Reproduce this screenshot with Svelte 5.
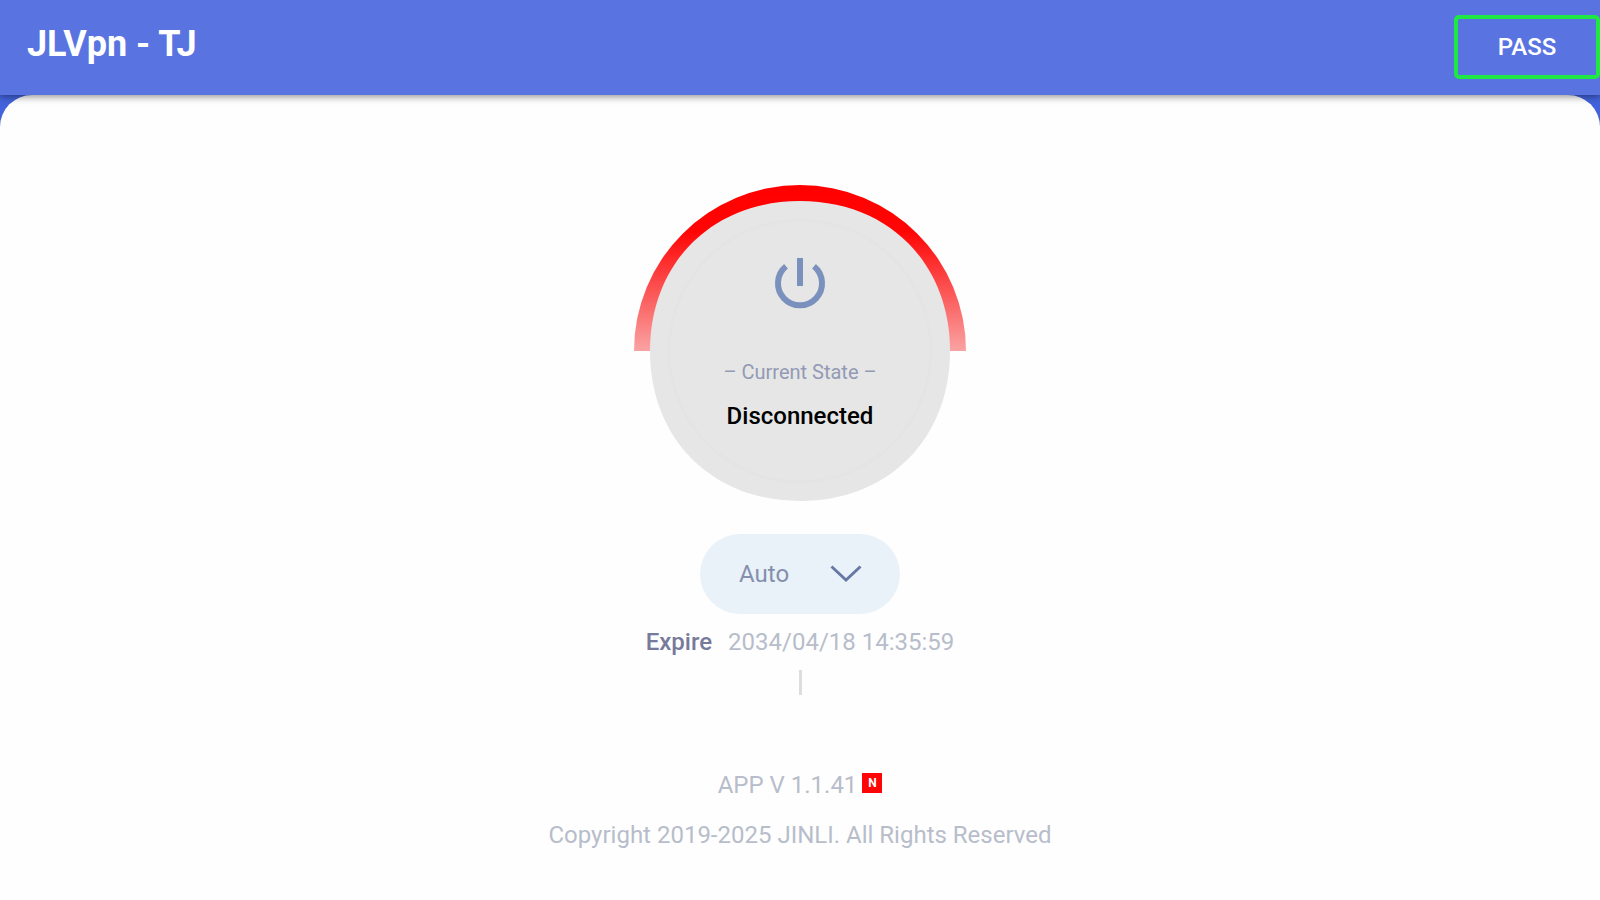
<script>
  let mode = $state('auto');
</script>

<div class="app">
  <header>
    <h1>JLVpn - TJ</h1>
    <button class="pass" type="button">PASS</button>
  </header>

  <main>
    <button class="dial" type="button">
      <svg class="ring" viewBox="0 0 332 316" aria-hidden="true">
        <defs>
          <linearGradient id="fade" gradientUnits="userSpaceOnUse" x1="0" y1="0" x2="0" y2="166">
            <stop offset="0" stop-color="#ff0000" />
            <stop offset="0.28" stop-color="#ff0505" />
            <stop offset="0.6" stop-color="#fc4c4c" />
            <stop offset="1" stop-color="#faa3a3" />
          </linearGradient>
        </defs>
        <path d="M0 166a166 166 0 0 1 332 0z" fill="url(#fade)" />
        <path
          d="M16 166C16 78 78 16 166 16S316 78 316 166S254 316 166 316S16 254 16 166z"
          fill="#e6e6e6"
        />
        <circle cx="166" cy="166" r="131" fill="none" stroke="#e4e4e4" stroke-width="3" />
      </svg>
      <span class="face">
        <svg class="power" viewBox="0 0 50 50" aria-hidden="true">
          <path d="M11 8.300a22 22 0 1 0 28 0" fill="none" stroke="#7b91bd" stroke-width="6" />
          <path d="M25 0v28" stroke="#7b91bd" stroke-width="6" />
        </svg>
        <span class="caption">– Current State –</span>
        <span class="state">Disconnected</span>
      </span>
    </button>

    <div class="picker">
      <select bind:value={mode} aria-label="Server">
        <option value="auto">Auto</option>
      </select>
      <svg class="chevron" viewBox="0 0 32 18" aria-hidden="true">
        <path d="M1.5 1.500L16 15L30.500 1.500" fill="none" stroke="#667aa5" stroke-width="3" />
      </svg>
    </div>

    <p class="expire"><strong>Expire</strong><span>2034/04/18 14:35:59</span></p>
    <div class="divider"></div>

    <footer>
      <p class="version">APP V 1.1.41<span class="badge">N</span></p>
      <p>Copyright 2019-2025 JINLI. All Rights Reserved</p>
    </footer>
  </main>
</div>

<style>
  :global(body) {
    margin: 0;
  }

  .app {
    display: flex;
    flex-direction: column;
    min-height: 100vh;
    background: #4263dc;
    font-family: Roboto, sans-serif;
    font-size: 24px;
    line-height: 32px;
    color: #b7bdca;
  }

  header {
    display: flex;
    align-items: center;
    justify-content: space-between;
    box-sizing: border-box;
    height: 95px;
    padding: 0 0 2px 27px;
    background: #5974e1;
    box-shadow: 0 1px 8px rgba(0, 0, 0, 0.5);
    z-index: 1;
    color: #fff;
  }

  h1 {
    margin: 0 0 6px;
    font-size: 36px;
    line-height: 44px;
    font-weight: 700;
  }

  .pass {
    box-sizing: border-box;
    width: 146px;
    height: 64px;
    padding: 0;
    border: 4px solid #1fe743;
    border-radius: 5px;
    background: none;
    color: #fff;
    font: 500 24px/32px Roboto, sans-serif;
  }

  main {
    flex: 1;
    display: flex;
    flex-direction: column;
    align-items: center;
    padding: 90px 0 48px;
    border-radius: 32px 32px 0 0;
    background: #fefefe;
  }

  p {
    margin: 0;
  }

  .dial {
    display: grid;
    width: 332px;
    padding: 0;
    border: 0;
    background: none;
    font: inherit;
  }

  .ring,
  .face {
    grid-area: 1 / 1;
  }

  .ring {
    display: block;
    width: 100%;
  }

  .face {
    display: flex;
    flex-direction: column;
    align-items: center;
    padding-top: 73px;
  }

  .power {
    width: 50px;
    height: 50px;
    overflow: visible;
  }

  .caption {
    margin-top: 48px;
    font-size: 20px;
    color: #929ab5;
  }

  .state {
    margin-top: 12px;
    font-weight: 500;
    color: #000;
  }

  .picker {
    display: grid;
    align-items: center;
    width: 200px;
    margin-top: 33px;
  }

  select {
    grid-area: 1 / 1;
    appearance: none;
    width: 100%;
    height: 80px;
    padding: 0 72px 0 39px;
    border: 0;
    border-radius: 40px;
    background: #eaf2f9;
    color: #8590ac;
    font: 400 24px/32px Roboto, sans-serif;
  }

  .chevron {
    grid-area: 1 / 1;
    justify-self: end;
    width: 32px;
    margin-right: 38px;
    pointer-events: none;
  }

  .expire {
    display: flex;
    gap: 16px;
    margin-top: 12px;
  }

  strong {
    font-weight: 500;
    color: #767a9b;
  }

  .divider {
    width: 3px;
    height: 25px;
    margin-top: 12px;
    background: #dcdde0;
  }

  footer {
    display: flex;
    flex-direction: column;
    align-items: center;
    gap: 18px;
    margin-top: 74px;
  }

  .version {
    display: flex;
    gap: 5px;
  }

  .badge {
    width: 20px;
    height: 20px;
    margin-top: 4px;
    background: #ff0508;
    color: #fff;
    font-size: 12px;
    font-weight: 700;
    line-height: 20px;
    text-align: center;
  }
</style>
